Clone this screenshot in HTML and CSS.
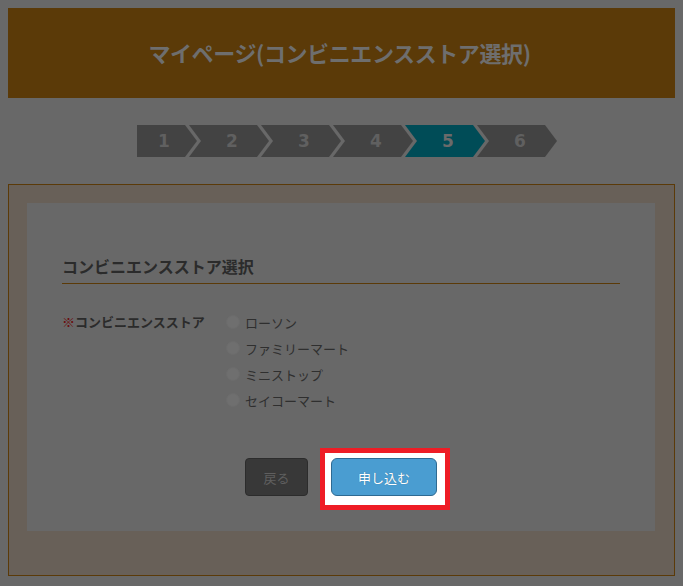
FILE: index.html
```html
<!DOCTYPE html>
<html lang="ja">
<head>
<meta charset="utf-8">
<title>マイページ(コンビニエンスストア選択)</title>
<link rel="stylesheet" href="styles.css">
</head>
<body>
<header class="page-header">
  <h1 class="page-title">マイページ(コンビニエンスストア選択)</h1>
</header>

<ol class="steps">
  <li class="step step-first">1</li>
  <li class="step">2</li>
  <li class="step">3</li>
  <li class="step">4</li>
  <li class="step step-current">5</li>
  <li class="step">6</li>
</ol>

<section class="panel">
  <div class="panel-inner">
    <h2 class="section-title">コンビニエンスストア選択</h2>
    <div class="form-row">
      <div class="form-label"><span class="req">※</span>コンビニエンスストア</div>
      <div class="options">
        <label class="option"><span class="radio"></span>ローソン</label>
        <label class="option"><span class="radio"></span>ファミリーマート</label>
        <label class="option"><span class="radio"></span>ミニストップ</label>
        <label class="option"><span class="radio"></span>セイコーマート</label>
      </div>
    </div>
    <div class="actions">
      <button class="btn btn-back" type="button">戻る</button>
      <span class="highlight-wrap">
        <button class="btn btn-submit" type="button">申し込む</button>
      </span>
    </div>
  </div>
</section>
</body>
</html>
```

FILE: styles.css
```css
html, body {
  margin: 0;
  padding: 0;
}
body {
  margin: 8px;
  background: #686868;
  font-family: "Noto Sans CJK JP", "Noto Sans", sans-serif;
  color: #2b2b2b;
}

.page-header {
  height: 90px;
  background: #5b3a08;
  display: flex;
  align-items: center;
  justify-content: center;
}
.page-title {
  margin: 0;
  font-size: 22px;
  font-weight: 700;
  color: #6e6e6e;
  letter-spacing: -0.4px;
  line-height: 1;
  padding-bottom: 2px;
  padding-right: 4px;
}

.steps {
  list-style: none;
  margin: 27px 0 0 0;
  padding: 0 0 0 129px;
  display: flex;
  height: 32px;
}
.step {
  height: 32px;
  width: 80px;
  margin-left: -8px;
  background: #434343;
  color: #606060;
  font-weight: 700;
  font-size: 17px;
  font-family: "DejaVu Sans", "Noto Sans", sans-serif;
  display: flex;
  align-items: center;
  justify-content: center;
  padding-left: 6px;
  box-sizing: border-box;
  clip-path: polygon(0 0, calc(100% - 12px) 0, 100% 50%, calc(100% - 12px) 100%, 0 100%, 12px 50%);
}
.step-first {
  width: 60px;
  margin-left: 0;
  padding-left: 0;
  padding-right: 6px;
  clip-path: polygon(0 0, calc(100% - 12px) 0, 100% 50%, calc(100% - 12px) 100%, 0 100%);
}
.step-current {
  background: #004c57;
  color: #6a6a6a;
}

.panel {
  margin-top: 27px;
  border: 1px solid #5b3a08;
  background: #686058;
  padding: 18px 19px 44px 18px;
}
.panel-inner {
  background: #686868;
  padding: 51px 35px 35px 35px;
}
.section-title {
  margin: 0;
  font-size: 16px;
  font-weight: 700;
  line-height: 24px;
  padding-bottom: 5px;
  border-bottom: 1px solid #5b3a08;
  color: #2b2b2b;
}

.form-row {
  display: flex;
  margin-top: 25px;
}
.form-label {
  width: 164px;
  font-size: 13px;
  font-weight: 700;
  line-height: 26px;
  color: #2b2b2b;
}
.req {
  color: #6b0c0c;
}
.options {
  display: flex;
  flex-direction: column;
}
.option {
  display: flex;
  align-items: center;
  height: 26px;
  font-size: 13px;
  color: #2f2f2f;
}
.radio {
  width: 14px;
  height: 14px;
  border-radius: 50%;
  background: #6f6f6f;
  border: 1px solid #6c6c6c;
  margin-right: 5px;
  box-sizing: border-box;
}

.actions {
  display: flex;
  justify-content: center;
  gap: 23px;
  margin-top: 45px;
}
.btn {
  height: 38px;
  font-family: "Noto Sans CJK JP", "Noto Sans", sans-serif;
  font-size: 13px;
  cursor: pointer;
}
.btn-back {
  width: 63px;
  background: #383838;
  border: 1px solid #2c2c2c;
  border-radius: 4px;
  color: #5f5f5f;
}
.highlight-wrap {
  position: relative;
  display: inline-block;
  height: 38px;
}
.highlight-wrap::before {
  content: "";
  position: absolute;
  left: -11px;
  right: -13px;
  top: -10px;
  bottom: -14px;
  background: #ffffff;
  border: 5px solid #ee1c25;
}
.btn-submit {
  position: relative;
  width: 106px;
  background: #4a9dd1;
  border: 1px solid #2e6a92;
  border-radius: 6px;
  color: #ffffff;
  text-shadow: 0 0 1px rgba(0, 0, 0, 0.3);
}
```
